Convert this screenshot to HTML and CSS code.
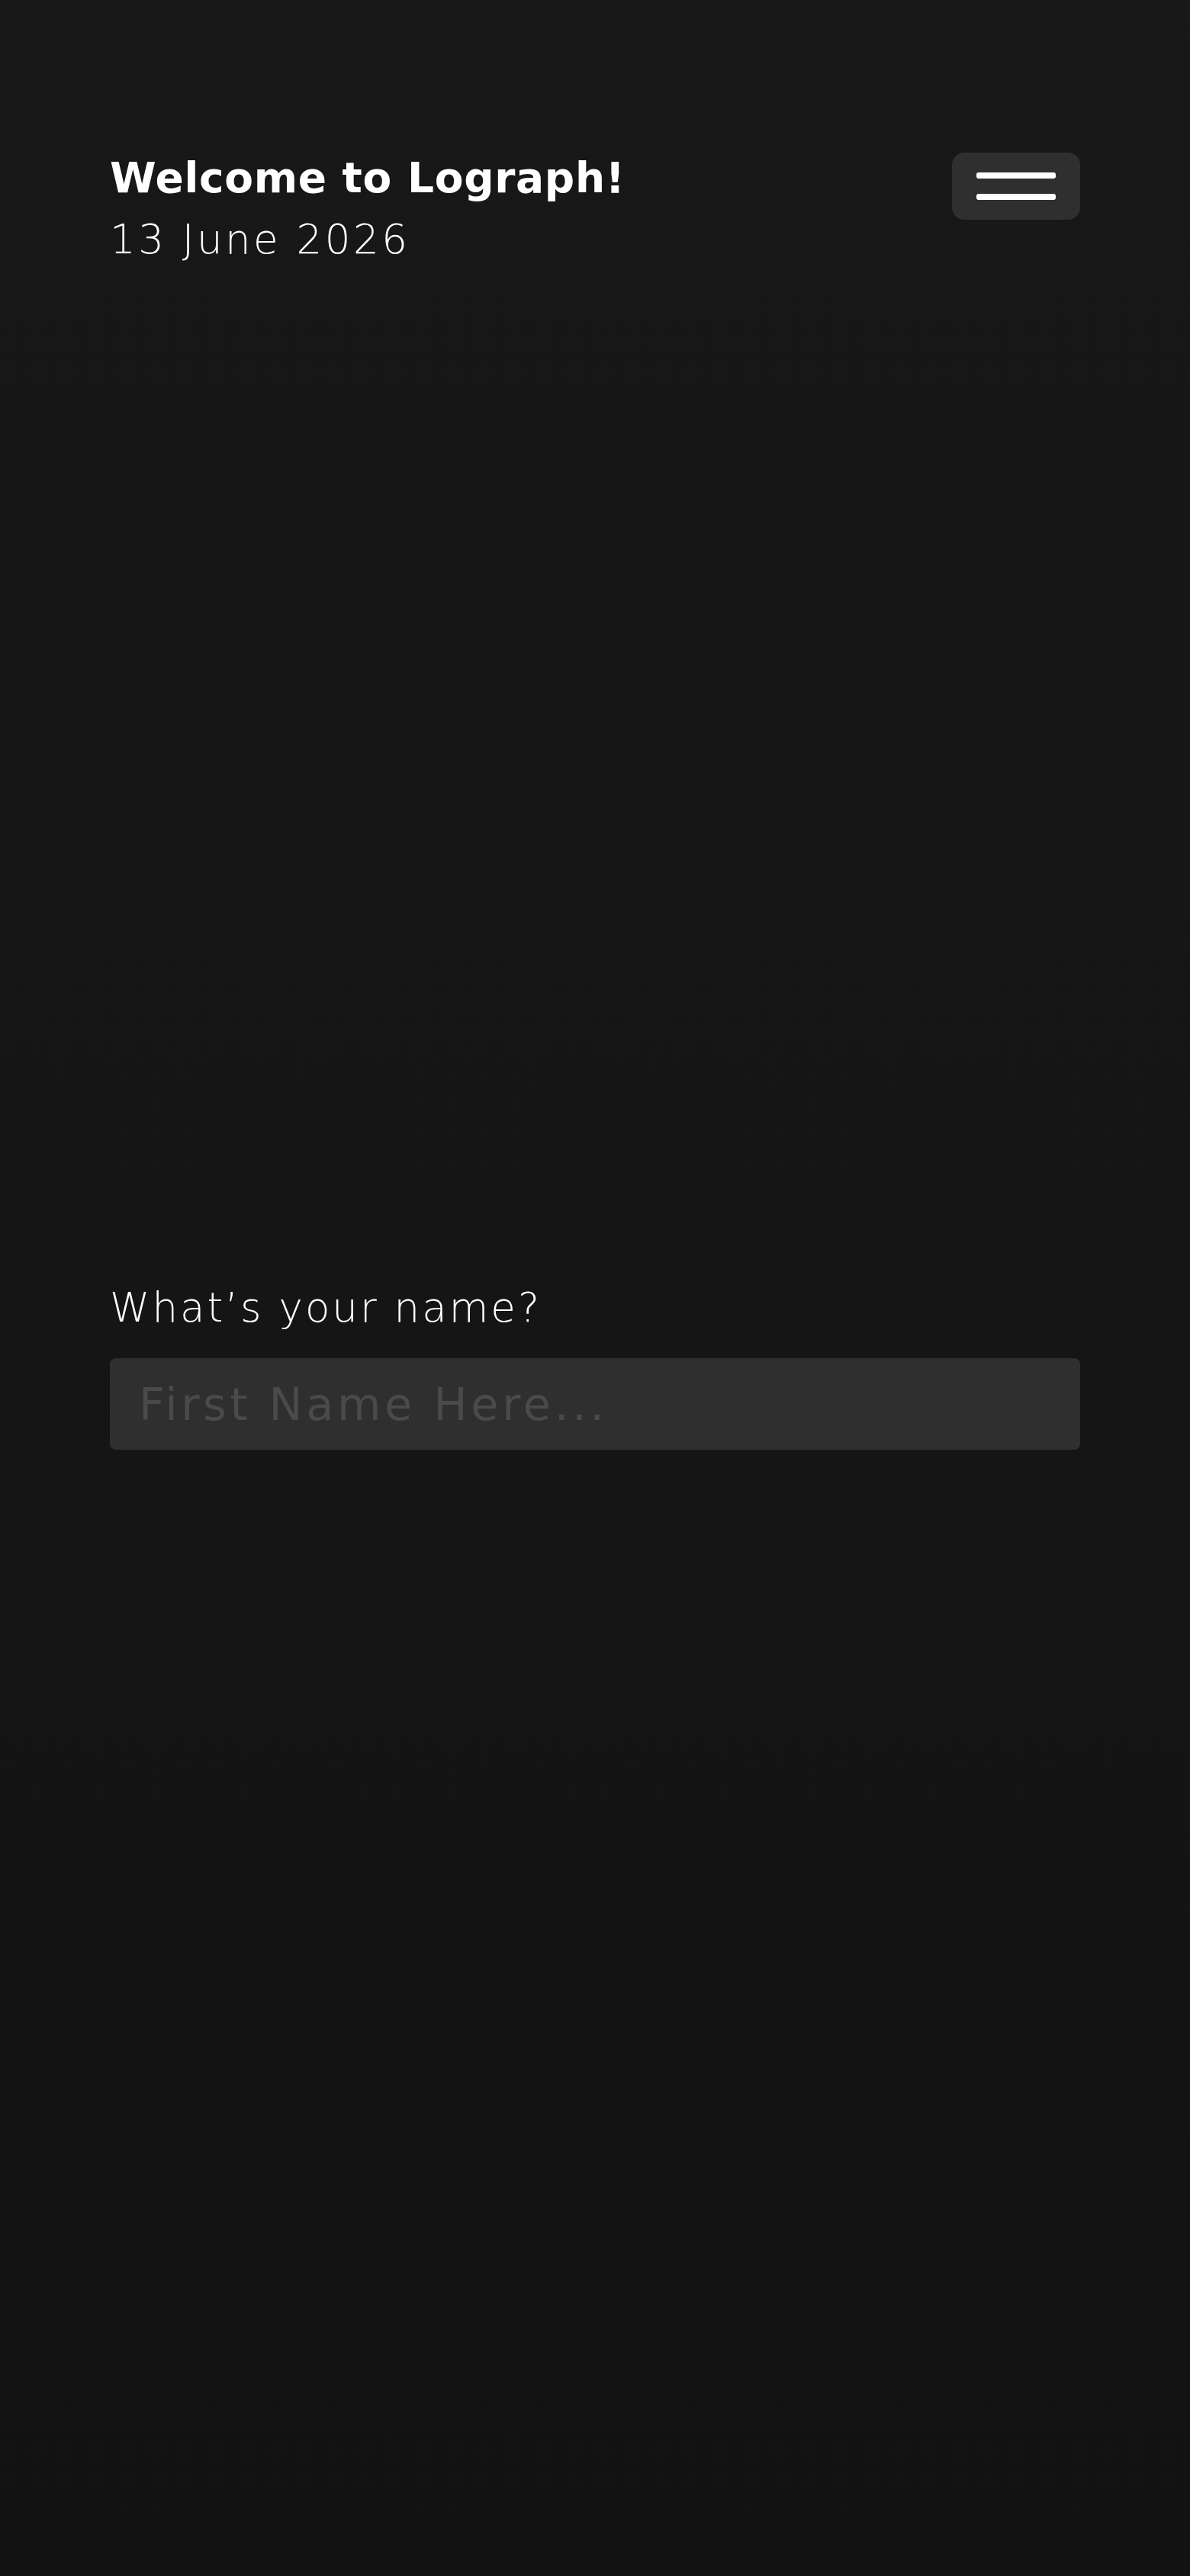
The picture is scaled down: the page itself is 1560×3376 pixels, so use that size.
FILE: index.html
```html
<!DOCTYPE html>
<html lang="en">
<head>
<meta charset="utf-8">
<title>Lograph</title>
<link rel="stylesheet" href="styles.css">
</head>
<body>
<main class="page">
  <header class="top">
    <div class="greeting">
      <h1 class="title">Welcome to Lograph!</h1>
      <p class="date">13 June 2026</p>
    </div>
    <button class="menu" type="button" aria-label="Menu">
      <span class="bar"></span>
      <span class="bar"></span>
    </button>
  </header>
  <section class="name-form">
    <label class="label" for="first-name">What’s your name?</label>
    <input class="field" id="first-name" type="text" placeholder="First Name Here...">
  </section>
</main>
</body>
</html>
```
FILE: styles.css
```css
html, body {
  margin: 0;
  padding: 0;
}
body {
  min-height: 3376px;
  background: linear-gradient(to bottom, #181818 0%, #151515 50%, #121212 100%);
  color: #ffffff;
  font-family: "DejaVu Sans", "Noto Sans", sans-serif;
}
.page {
  padding: 200px 144px 0 144px;
}
.top {
  display: flex;
  justify-content: space-between;
  align-items: flex-start;
}
.title {
  margin: 0;
  font-size: 55px;
  line-height: 66px;
  font-weight: 700;
  letter-spacing: 0.7px;
}
.date {
  margin: 16px 0 0 0;
  font-size: 53px;
  line-height: 64px;
  font-weight: 300;
  letter-spacing: 3.5px;
}
.menu {
  width: 168px;
  height: 88px;
  border: 0;
  border-radius: 16px;
  background: #2f2f2f;
  padding: 0;
  display: flex;
  flex-direction: column;
  align-items: center;
  justify-content: center;
  gap: 20px;
}
.bar {
  display: block;
  width: 104px;
  height: 8px;
  border-radius: 3px;
  background: #ffffff;
}
.name-form {
  margin-top: 1336px;
  display: flex;
  flex-direction: column;
}
.label {
  font-size: 53px;
  line-height: 64px;
  font-weight: 300;
  letter-spacing: 3px;
  margin-bottom: 34px;
}
.field {
  box-sizing: border-box;
  width: 100%;
  height: 120px;
  margin: 0;
  border: 0;
  outline: none;
  border-radius: 8px;
  background: #2f2f2f;
  padding: 0 0 0 38px;
  color: #ffffff;
  font-family: "DejaVu Sans", "Noto Sans", sans-serif;
  font-size: 59px;
  letter-spacing: 4.6px;
}
.field::placeholder {
  color: #4a4a4a;
}
```
